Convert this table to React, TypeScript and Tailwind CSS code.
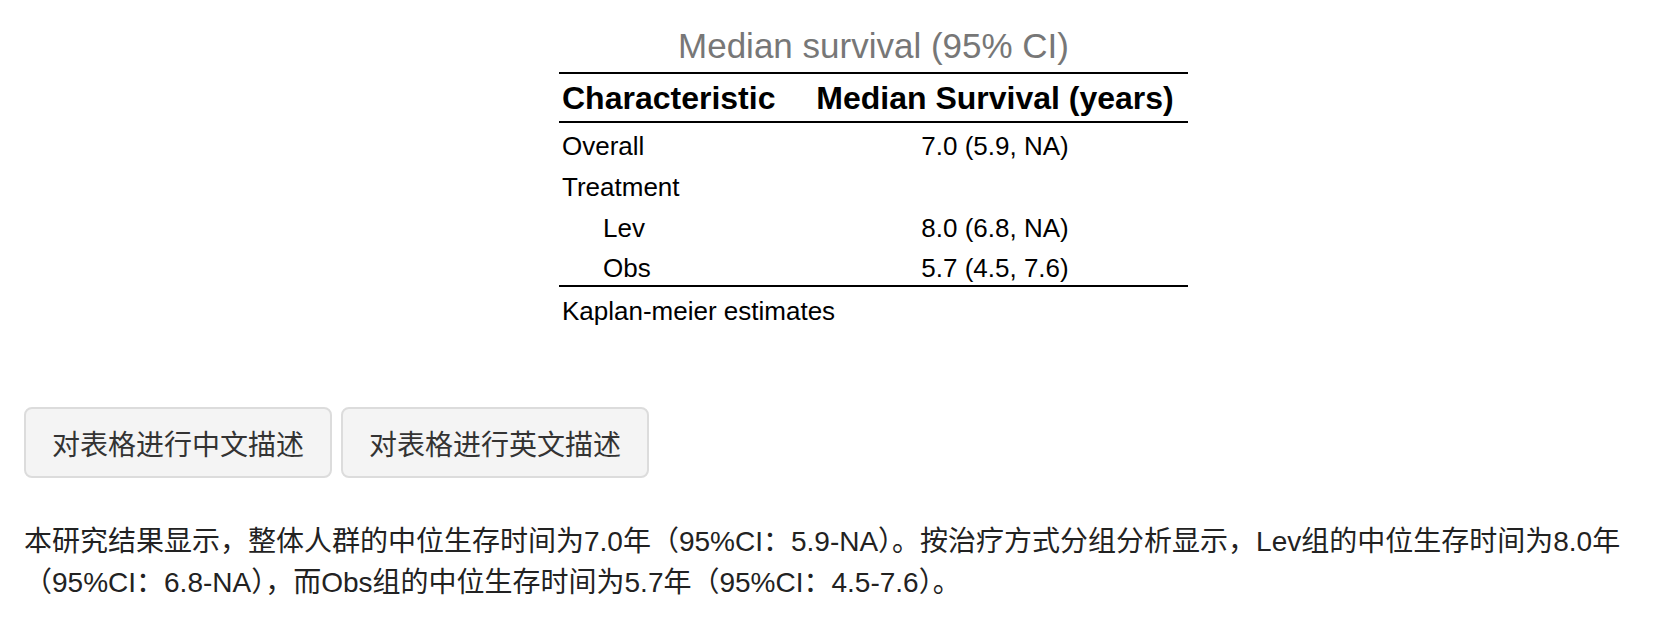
import React from "react";

const latin = { fontFamily: '"Liberation Sans", Arial, "Noto Sans CJK SC", sans-serif' };

export default function App() {
  const rows: { label: string; value: string; indent?: boolean }[] = [
    { label: "Overall", value: "7.0 (5.9, NA)" },
    { label: "Treatment", value: "" },
    { label: "Lev", value: "8.0 (6.8, NA)", indent: true },
    { label: "Obs", value: "5.7 (4.5, 7.6)", indent: true },
  ];
  return (
    <div className="w-[1673px] min-h-[636px] bg-white px-[24px]" style={latin}>
      <div className="ml-[535px] w-[629px]">
        <div className="h-[72px] pt-[18px] flex items-center justify-center text-[35px] text-[#777777] leading-none">
          Median survival (95% CI)
        </div>
        <table className="w-[629px] border-collapse text-black">
          <thead>
            <tr className="border-t-2 border-b-2 border-black h-[49px]">
              <th className="w-[243px] pl-[3px] text-left font-bold text-[32px] leading-none">Characteristic</th>
              <th className="text-center font-bold text-[32px] leading-none">Median Survival (years)</th>
            </tr>
          </thead>
          <tbody className="border-b-2 border-black">
            {rows.map((r) => (
              <tr key={r.label} className="h-[41px]">
                <td className={`pt-[6px] text-[26px] leading-none ${r.indent ? "pl-[44px]" : "pl-[3px]"}`}>{r.label}</td>
                <td className="pt-[6px] text-center text-[26px] leading-none">{r.value}</td>
              </tr>
            ))}
          </tbody>
        </table>
        <div className="h-[49px] flex items-center pl-[3px] text-[26px] text-black">Kaplan-meier estimates</div>
      </div>
      <div className="mt-[71px] flex gap-[9px]" style={{ fontFamily: '"Noto Sans CJK SC", "Liberation Sans", sans-serif' }}>
        <button className="h-[71px] px-[26px] bg-[#f4f4f4] border-2 border-[#dcdcdc] rounded-[8px] text-[28px] text-[#333333]">
          对表格进行中文描述
        </button>
        <button className="h-[71px] px-[26px] bg-[#f4f4f4] border-2 border-[#dcdcdc] rounded-[8px] text-[28px] text-[#333333]">
          对表格进行英文描述
        </button>
      </div>
      <p className="mt-[44px] text-[28px] leading-[40.5px] text-[#222222]" style={{ fontFamily: '"Liberation Sans", "Noto Sans CJK SC", sans-serif' }}>
        本研究结果显示，整体人群的中位生存时间为7.0年（95%CI：5.9-NA）。按治疗方式分组分析显示，Lev组的中位生存时间为8.0年
        <br />
        （95%CI：6.8-NA），而Obs组的中位生存时间为5.7年（95%CI：4.5-7.6）。
      </p>
    </div>
  );
}
